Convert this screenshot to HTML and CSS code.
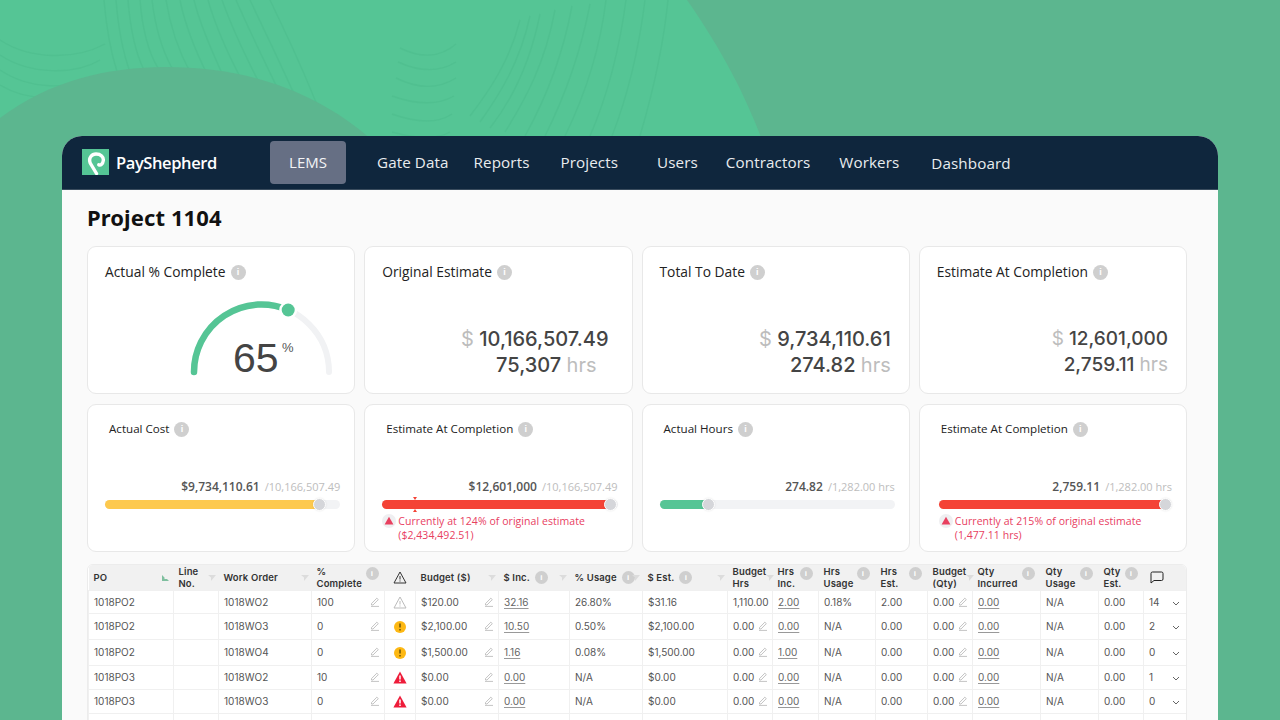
FILE: index.html
```html
<!DOCTYPE html>
<html lang="en">
<head>
<meta charset="utf-8">
<title>PayShepherd – Project 1104</title>
<link rel="stylesheet" href="styles.css">
</head>
<body>
<svg class="backdrop" width="1280" height="720" viewBox="0 0 1280 720" aria-hidden="true">
  <path class="bd-light" d="M0 0H687C722 50 745 95 762 140H0Z"/>
  <g class="bd-lines">
    <path d="M0 40C30 60 75 60 105 44M0 55C30 75 75 75 100 60M0 70C30 90 70 90 95 76M0 85C25 100 50 100 75 92"/>
    <path d="M104 0C106 25 110 50 118 75M116 0C118 25 122 50 130 72M128 0C130 25 134 50 144 70M140 0C142 25 147 50 158 68M152 0C155 25 162 50 172 68M166 0C170 25 178 50 190 72M180 0C185 25 194 48 208 76M194 0C200 25 212 52 226 82M208 0C216 28 228 55 246 88M222 0C232 28 246 58 266 96M236 0C248 28 264 60 286 106M250 0C264 30 280 62 304 116M270 0C284 30 302 64 326 128"/>
    <path d="M400 48C420 58 440 58 456 44M398 62C420 72 440 72 456 62M396 78C420 90 440 88 456 78M392 96C420 106 440 104 454 96M392 114C420 124 440 122 452 114M392 132C420 140 440 138 450 132"/>
    <path d="M470 116C490 90 510 60 520 20M480 122C500 94 520 62 530 16M490 128C512 100 530 64 540 14M505 132C525 100 545 64 555 10M525 136C545 100 562 60 572 6M545 136C565 96 580 56 590 4M565 136C585 95 600 50 606 0M590 136C610 90 620 45 626 0M612 136C630 90 640 40 645 0M640 136C655 85 664 40 668 0"/>
  </g>
  <path class="bd-dark" d="M0 118C50 80 110 67 165 67C245 67 315 90 372 140H0Z"/>
</svg>

<svg class="defs" width="0" height="0" aria-hidden="true">
  <symbol id="pen" viewBox="0 0 10 10"><path d="M1.500 6.600 6.800 1.200 8.300 2.600 3 8H1.500ZM1 9.400H9" fill="none" stroke="currentColor" stroke-width=".7"/></symbol>
  <symbol id="sort" viewBox="0 0 8 8"><path d="M0 1H8L3 7V3.500Z" fill="currentColor"/></symbol>
  <symbol id="sortup" viewBox="0 0 8 8"><path d="M1 1V7H8L6 5H3.500V3.400Z" fill="currentColor"/></symbol>
  <symbol id="warnline" viewBox="0 0 14 13"><path d="M7 1 13 12H1Z" fill="none" stroke="currentColor"/><path d="M7 5V8.500M7 9.500V10.500" stroke="currentColor"/></symbol>
  <symbol id="warnred" viewBox="0 0 14 13"><path d="M7 .5 13.600 12.500H.4Z" fill="#ee1c3a"/><path d="M7 4.500V8.500M7 9.600V11" stroke="#fff" stroke-width="1.500"/></symbol>
  <symbol id="warnamber" viewBox="0 0 12 12"><circle cx="6" cy="6" r="6" fill="#fdb813"/><path d="M6 2.600V6.600M6 8V9.400" stroke="#4a3a05" stroke-width="1.200"/></symbol>
  <symbol id="chev" viewBox="0 0 8 5"><path d="M1 1 4 4 7 1" fill="none" stroke="currentColor"/></symbol>
</svg>

<main class="app">
  <header class="nav">
    <div class="brand">
      <svg class="logo" width="27" height="26" viewBox="0 0 27 26" aria-hidden="true">
        <rect width="27" height="26" fill="#55c595"/>
        <path d="M14.500 24.500 8.200 14C6.200 8.500 10 5 14 5 18.800 5 21.800 8 21.300 11.500 20.800 15 18.800 16.500 16.800 15.800" fill="none" stroke="#fff" stroke-width="3.400" stroke-linecap="round"/>
      </svg>
      <span class="brand-name">PayShepherd</span>
    </div>
    <a class="nav-active">LEMS</a>
    <a class="nav-link gate">Gate Data</a>
    <a class="nav-link reports">Reports</a>
    <a class="nav-link projects">Projects</a>
    <a class="nav-link users">Users</a>
    <a class="nav-link contractors">Contractors</a>
    <a class="nav-link workers">Workers</a>
    <a class="nav-link dashboard">Dashboard</a>
  </header>

  <section class="content">
    <h1 class="title">Project 1104</h1>

    <div class="cards top">
      <article class="card">
        <h2 class="card-title">Actual % Complete <i class="info big">i</i></h2>
        <div class="gauge">
          <svg width="160" height="90" viewBox="0 0 160 90" aria-hidden="true">
            <path d="M12 77A67.500 67.500 0 0 1 147 77" fill="none" stroke="#f1f2f4" stroke-width="6" stroke-linecap="round"/>
            <path d="M12 77A67.500 67.500 0 0 1 106.200 15" fill="none" stroke="#55c595" stroke-width="6.500" stroke-linecap="round"/>
            <circle cx="106.200" cy="15" r="9" fill="#fff"/>
            <circle cx="106.200" cy="15" r="6.500" fill="#55c595"/>
          </svg>
          <div class="gauge-value">65<sup>%</sup></div>
        </div>
      </article>
      <article class="card">
        <h2 class="card-title">Original Estimate <i class="info big">i</i></h2>
        <div class="figures wide">
          <div><span class="muted">$</span>&nbsp;10,166,507.49</div>
          <div class="indent">75,307 <span class="muted">hrs</span></div>
        </div>
      </article>
      <article class="card">
        <h2 class="card-title">Total To Date <i class="info big">i</i></h2>
        <div class="figures">
          <div><span class="muted">$</span>&nbsp;9,734,110.61</div>
          <div>274.82 <span class="muted">hrs</span></div>
        </div>
      </article>
      <article class="card">
        <h2 class="card-title">Estimate At Completion <i class="info big">i</i></h2>
        <div class="figures narrow">
          <div><span class="muted">$</span>&nbsp;12,601,000</div>
          <div>2,759.11 <span class="muted">hrs</span></div>
        </div>
      </article>
    </div>

    <div class="cards second">
      <article class="card small">
        <h3 class="mini-title">Actual Cost <i class="info big">i</i></h3>
        <div class="amount"><b>$9,734,110.61</b> <span>/10,166,507.49</span></div>
        <div class="bar"><div class="fill yellow" style="width:214px"></div><i class="knob"></i></div>
      </article>
      <article class="card small">
        <h3 class="mini-title">Estimate At Completion <i class="info big">i</i></h3>
        <div class="amount"><b>$12,601,000</b> <span>/10,166,507.49</span></div>
        <div class="bar"><div class="fill red" style="width:228px"></div><i class="knob"></i><i class="tick t1"></i><i class="tick t2"></i></div>
        <div class="alert">
          <svg class="alert-icon" width="14" height="14" viewBox="0 0 14 14" aria-hidden="true"><circle cx="7" cy="7" r="7" fill="#efeff1"/><path d="M7 2.800 11.400 10.600H2.600Z" fill="#e8405f"/></svg>
          <p>Currently at 124% of original estimate<br>($2,434,492.51)</p>
        </div>
      </article>
      <article class="card small">
        <h3 class="mini-title">Actual Hours <i class="info big">i</i></h3>
        <div class="amount"><b>274.82</b> <span>/1,282.00 hrs</span></div>
        <div class="bar"><div class="fill green" style="width:48px"></div><i class="knob"></i></div>
      </article>
      <article class="card small last">
        <h3 class="mini-title">Estimate At Completion <i class="info big">i</i></h3>
        <div class="amount"><b>2,759.11</b> <span>/1,282.00 hrs</span></div>
        <div class="bar"><div class="fill red" style="width:227px"></div><i class="knob"></i></div>
        <div class="alert">
          <svg class="alert-icon" width="14" height="14" viewBox="0 0 14 14" aria-hidden="true"><circle cx="7" cy="7" r="7" fill="#efeff1"/><path d="M7 2.800 11.400 10.600H2.600Z" fill="#e8405f"/></svg>
          <p>Currently at 215% of original estimate<br>(1,477.11 hrs)</p>
        </div>
      </article>
    </div>

    <div class="table-wrap">
      <table class="grid">
        <colgroup>
          <col class="c85"><col class="c45"><col class="c93"><col class="c73"><col class="c31"><col class="c83"><col class="c71"><col class="c73"><col class="c85"><col class="c45"><col class="c46"><col class="c57"><col class="c52"><col class="c45"><col class="c68"><col class="c58"><col class="c45"><col class="c43">
        </colgroup>
        <thead>
          <tr>
            <th><div class="th">PO<svg class="sort up"><use href="#sortup"/></svg></div></th>
            <th><div class="th"><span>Line<br>No.</span><svg class="sort"><use href="#sort"/></svg></div></th>
            <th><div class="th">Work Order<svg class="sort"><use href="#sort"/></svg></div></th>
            <th><div class="th"><span>%<br>Complete</span><i class="info">i</i></div></th>
            <th><div class="th center"><svg class="warnhead"><use href="#warnline"/></svg></div></th>
            <th><div class="th">Budget ($)<svg class="sort"><use href="#sort"/></svg></div></th>
            <th><div class="th">$ Inc.<i class="info inline">i</i><svg class="sort"><use href="#sort"/></svg></div></th>
            <th><div class="th">% Usage<i class="info inline">i</i><svg class="sort lap"><use href="#sort"/></svg></div></th>
            <th><div class="th">$ Est.<i class="info inline">i</i><svg class="sort"><use href="#sort"/></svg></div></th>
            <th><div class="th"><span>Budget<br>Hrs</span><svg class="sort"><use href="#sort"/></svg></div></th>
            <th><div class="th"><span>Hrs<br>Inc.</span><i class="info">i</i></div></th>
            <th><div class="th"><span>Hrs<br>Usage</span><i class="info">i</i></div></th>
            <th><div class="th"><span>Hrs<br>Est.</span><i class="info">i</i></div></th>
            <th><div class="th"><span>Budget<br>(Qty)</span><svg class="sort"><use href="#sort"/></svg></div></th>
            <th><div class="th"><span>Qty<br>Incurred</span><i class="info">i</i></div></th>
            <th><div class="th"><span>Qty<br>Usage</span><i class="info">i</i></div></th>
            <th><div class="th"><span>Qty<br>Est.</span><i class="info">i</i></div></th>
            <th><div class="th"><svg class="bubble" viewBox="0 0 14 13"><path d="M2.500 1H11.500A1.500 1.500 0 0 1 13 2.500V8A1.500 1.500 0 0 1 11.500 9.500H4L1 12V2.500A1.500 1.500 0 0 1 2.500 1Z" fill="none" stroke="#222"/></svg></div></th>
          </tr>
        </thead>
        <tbody>
          <tr class="r1">
            <td>1018PO2</td><td></td><td>1018WO2</td>
            <td><div class="edit">100<svg class="pen"><use href="#pen"/></svg></div></td>
            <td class="mid"><svg class="warn line"><use href="#warnline"/></svg></td>
            <td><div class="edit">$120.00<svg class="pen"><use href="#pen"/></svg></div></td>
            <td><u>32.16</u></td><td>26.80%</td><td>$31.16</td><td>1,110.00</td><td><u>2.00</u></td><td>0.18%</td><td>2.00</td>
            <td><div class="edit">0.00<svg class="pen"><use href="#pen"/></svg></div></td>
            <td><u>0.00</u></td><td>N/A</td><td>0.00</td><td><div class="edit">14<svg class="chev"><use href="#chev"/></svg></div></td>
          </tr>
          <tr class="r2">
            <td>1018PO2</td><td></td><td>1018WO3</td>
            <td><div class="edit">0<svg class="pen"><use href="#pen"/></svg></div></td>
            <td class="mid"><svg class="warn amber"><use href="#warnamber"/></svg></td>
            <td><div class="edit">$2,100.00<svg class="pen"><use href="#pen"/></svg></div></td>
            <td><u>10.50</u></td><td>0.50%</td><td>$2,100.00</td>
            <td><div class="edit">0.00<svg class="pen"><use href="#pen"/></svg></div></td>
            <td><u>0.00</u></td><td>N/A</td><td>0.00</td>
            <td><div class="edit">0.00<svg class="pen"><use href="#pen"/></svg></div></td>
            <td><u>0.00</u></td><td>N/A</td><td>0.00</td><td><div class="edit">2<svg class="chev"><use href="#chev"/></svg></div></td>
          </tr>
          <tr class="r2">
            <td>1018PO2</td><td></td><td>1018WO4</td>
            <td><div class="edit">0<svg class="pen"><use href="#pen"/></svg></div></td>
            <td class="mid"><svg class="warn amber"><use href="#warnamber"/></svg></td>
            <td><div class="edit">$1,500.00<svg class="pen"><use href="#pen"/></svg></div></td>
            <td><u>1.16</u></td><td>0.08%</td><td>$1,500.00</td>
            <td><div class="edit">0.00<svg class="pen"><use href="#pen"/></svg></div></td>
            <td><u>1.00</u></td><td>N/A</td><td>0.00</td>
            <td><div class="edit">0.00<svg class="pen"><use href="#pen"/></svg></div></td>
            <td><u>0.00</u></td><td>N/A</td><td>0.00</td><td><div class="edit">0<svg class="chev"><use href="#chev"/></svg></div></td>
          </tr>
          <tr class="r3">
            <td>1018PO3</td><td></td><td>1018WO2</td>
            <td><div class="edit">10<svg class="pen"><use href="#pen"/></svg></div></td>
            <td class="mid"><svg class="warn"><use href="#warnred"/></svg></td>
            <td><div class="edit">$0.00<svg class="pen"><use href="#pen"/></svg></div></td>
            <td><u>0.00</u></td><td>N/A</td><td>$0.00</td>
            <td><div class="edit">0.00<svg class="pen"><use href="#pen"/></svg></div></td>
            <td><u>0.00</u></td><td>N/A</td><td>0.00</td>
            <td><div class="edit">0.00<svg class="pen"><use href="#pen"/></svg></div></td>
            <td><u>0.00</u></td><td>N/A</td><td>0.00</td><td><div class="edit">1<svg class="chev"><use href="#chev"/></svg></div></td>
          </tr>
          <tr class="r3">
            <td>1018PO3</td><td></td><td>1018WO3</td>
            <td><div class="edit">0<svg class="pen"><use href="#pen"/></svg></div></td>
            <td class="mid"><svg class="warn"><use href="#warnred"/></svg></td>
            <td><div class="edit">$0.00<svg class="pen"><use href="#pen"/></svg></div></td>
            <td><u>0.00</u></td><td>N/A</td><td>$0.00</td>
            <td><div class="edit">0.00<svg class="pen"><use href="#pen"/></svg></div></td>
            <td><u>0.00</u></td><td>N/A</td><td>0.00</td>
            <td><div class="edit">0.00<svg class="pen"><use href="#pen"/></svg></div></td>
            <td><u>0.00</u></td><td>N/A</td><td>0.00</td><td><div class="edit">0<svg class="chev"><use href="#chev"/></svg></div></td>
          </tr>
          <tr class="r3">
            <td></td><td></td><td></td><td></td><td></td><td></td><td></td><td></td><td></td><td></td><td></td><td></td><td></td><td></td><td></td><td></td><td></td><td></td>
          </tr>
        </tbody>
      </table>
    </div>
  </section>
</main>
</body>
</html>
```
FILE: styles.css
```css
* { box-sizing: border-box; }
html, body { margin: 0; height: 720px; overflow: hidden; }
body { position: relative; background: #5cb68f; font-family: "Inter", "Liberation Sans", sans-serif; color: #333; padding: 136px 62px 0; }

.backdrop { position: absolute; left: 0; top: 0; }
.bd-light { fill: #55c595; }
.bd-dark { fill: #5cb68f; }
.bd-lines path { fill: none; stroke: #4dbb8c; stroke-width: 1.400; opacity: .55; }
.defs { position: absolute; }

.app { position: relative; width: 1156px; height: 584px; background: #fafafa; border-radius: 20px 20px 0 0; overflow: hidden; }

.nav { height: 54px; background: #0f263d; display: flex; align-items: center; font-family: "Open Sans", sans-serif; color: #e9ecef; font-size: 15px; border-bottom: 1px solid #3a4c5e; }
.brand { display: flex; align-items: center; margin-left: 20px; width: 188px; }
.logo { flex: none; margin-top: -1px; }
.brand-name { margin-left: 7px; font-size: 16.500px; font-weight: 600; letter-spacing: -.4px; color: #fff; }
.nav-active { width: 76px; height: 43px; margin-top: -1px; display: flex; align-items: center; justify-content: center; background: #666f84; border-radius: 4px; font-weight: 500; color: #f3f4f6; font-size: 15px; }
.nav-link { font-size: 15.200px; letter-spacing: .1px; margin-top: -1px; }
.gate { margin-left: 31px; }
.reports { margin-left: 25px; }
.projects { margin-left: 31px; }
.users { margin-left: 39px; }
.contractors { margin-left: 28px; }
.workers { margin-left: 29px; }
.dashboard { margin-left: 32px; margin-top: 1px; }

.content { padding: 0 31px 0 25px; }
.title { margin: 0 0 2px; height: 54px; display: flex; align-items: center; font-family: "Noto Sans", sans-serif; font-size: 22px; font-weight: 700; color: #111; letter-spacing: .1px; }

.cards { display: grid; grid-template-columns: repeat(4, minmax(0, 1fr)); gap: 9px; }
.cards.top { margin-bottom: 10px; }
.cards.second { margin-bottom: 12px; }
.card { position: relative; background: #fff; border: 1.500px solid #e8e8e8; border-radius: 9px; height: 148px; padding: 16px 17px 0; display: flex; flex-direction: column; }

.card-title { margin: 0; font-family: "Open Sans", sans-serif; font-size: 13.800px; font-weight: 500; color: #222; line-height: 18px; display: flex; align-items: center; }
.info { flex: none; display: inline-flex; width: 13px; height: 13px; border-radius: 50%; background: #cfcfcf; color: #fff; align-items: center; justify-content: center; font: 700 8px "Liberation Sans", sans-serif; }
.info.big { width: 15px; height: 15px; margin-left: 5px; font-size: 9px; }

.gauge { position: relative; width: 160px; height: 90px; margin: 14px 0 0 77px; }
.gauge svg { display: block; }
.gauge-value { position: absolute; left: 51px; top: 38px; font: 400 41px/50px "Liberation Sans", sans-serif; color: #444; white-space: nowrap; }
.gauge-value sup { position: absolute; left: 49px; top: 5px; font-size: 13px; line-height: 20px; font-weight: 400; color: #555; vertical-align: baseline; }

.figures { margin-top: 45px; padding-right: 1px; text-align: right; font-size: 20px; line-height: 26px; font-weight: 500; color: #444; }
.figures.wide { padding-right: 6px; }
.figures.narrow { font-size: 19px; }
.indent { padding-right: 12px; }
.muted { color: #bdbdbd; font-weight: 400; }

.small { padding: 14px 14px 0 17px; }
.mini-title { margin: 0 0 0 4px; font-family: "Open Sans", sans-serif; font-size: 11.600px; font-weight: 500; color: #222; line-height: 20px; display: flex; align-items: center; }
.amount { margin-top: 39px; text-align: right; font-family: "Open Sans", sans-serif; font-size: 12px; line-height: 18px; color: #555; }
.amount b { font-weight: 600; }
.amount span { color: #bdbdbd; font-size: 11px; margin-left: 2px; }
.bar { position: relative; height: 9px; margin-top: 4px; background: #f2f3f5; border-radius: 5px; display: flex; align-items: center; }
.fill { height: 9px; border-radius: 5px; }
.yellow { background: #fdc94e; }
.red { background: #f44336; }
.green { background: #55c595; }
.knob { width: 13px; height: 13px; margin-left: -6px; background: #d5d6da; border: 1px solid #fff; border-radius: 50%; box-shadow: 0 0 2px rgba(0,0,0,.1); flex: none; }
.tick { position: absolute; left: 31px; width: 0; height: 0; border-left: 2px solid transparent; border-right: 2px solid transparent; }
.t1 { top: -3px; border-top: 3px solid #f44336; }
.t2 { bottom: -3px; border-bottom: 3px solid #f44336; }
.alert { display: flex; align-items: flex-start; margin-top: 5px; }
.alert-icon { flex: none; margin-right: 2px; }
.alert p { margin: 0; font-family: "Open Sans", sans-serif; font-size: 10.500px; line-height: 14px; color: #e8405f; letter-spacing: .06px; }
.last .bar, .last .alert { margin-left: 2px; }

.table-wrap { border: 1px solid #ececec; border-radius: 6px 6px 0 0; overflow: hidden; width: 1100px; }
.grid { border-collapse: collapse; table-layout: fixed; width: 1098px; font-size: 10px; color: #555; background: #fff; }
.c85 { width: 85px; } .c45 { width: 45px; } .c93 { width: 93px; } .c73 { width: 73px; } .c31 { width: 31px; }
.c83 { width: 83px; } .c71 { width: 71px; } .c46 { width: 46px; } .c57 { width: 57px; } .c52 { width: 52px; }
.c68 { width: 68px; } .c58 { width: 58px; } .c43 { width: 43px; }
thead tr { height: 25px; }
th { padding: 0; background: #f1f1f1; font-weight: 600; text-align: left; color: #333; letter-spacing: .15px; line-height: 12px; font-size: 9.500px; }
.th { display: flex; align-items: center; padding: 0 3px 0 5px; height: 25px; white-space: nowrap; }
.th.center { justify-content: center; padding: 0; }
.r1 { height: 23px; } .r2 { height: 26px; } .r3 { height: 24px; }
td { padding: 0 3px 0 5px; border: 1px solid #f0f0f0; white-space: nowrap; }
.r2 td, .r3 td { padding-bottom: 1px; }
td.mid { padding: 0; text-align: center; }
td u { color: #666; text-decoration-color: #999; text-underline-offset: 2px; }
.edit { display: flex; align-items: center; justify-content: space-between; }
.pen { width: 10px; height: 10px; color: #aaa; margin-right: 1px; flex: none; }
.chev { width: 8px; height: 5px; color: #666; margin: 3px 3px 0 0; flex: none; }
.warn { width: 14px; height: 13px; display: block; margin: 0 auto; }
.warn.line { color: #bbb; }
.warn.amber { width: 12px; height: 12px; }
.warnhead { width: 14px; height: 13px; color: #333; }
.bubble { width: 14px; height: 13px; margin-left: 1px; }
.sort { width: 8px; height: 8px; color: #dcdcdc; margin-left: auto; flex: none; }
.sort.up { color: #7fbf9f; margin-right: 2px; }
.sort.lap { margin-left: -3px; }
.th > .info { margin-left: auto; margin-right: 3px; margin-top: -8px; }
.th > .info.inline { margin: 0 0 0 5px; }
```
